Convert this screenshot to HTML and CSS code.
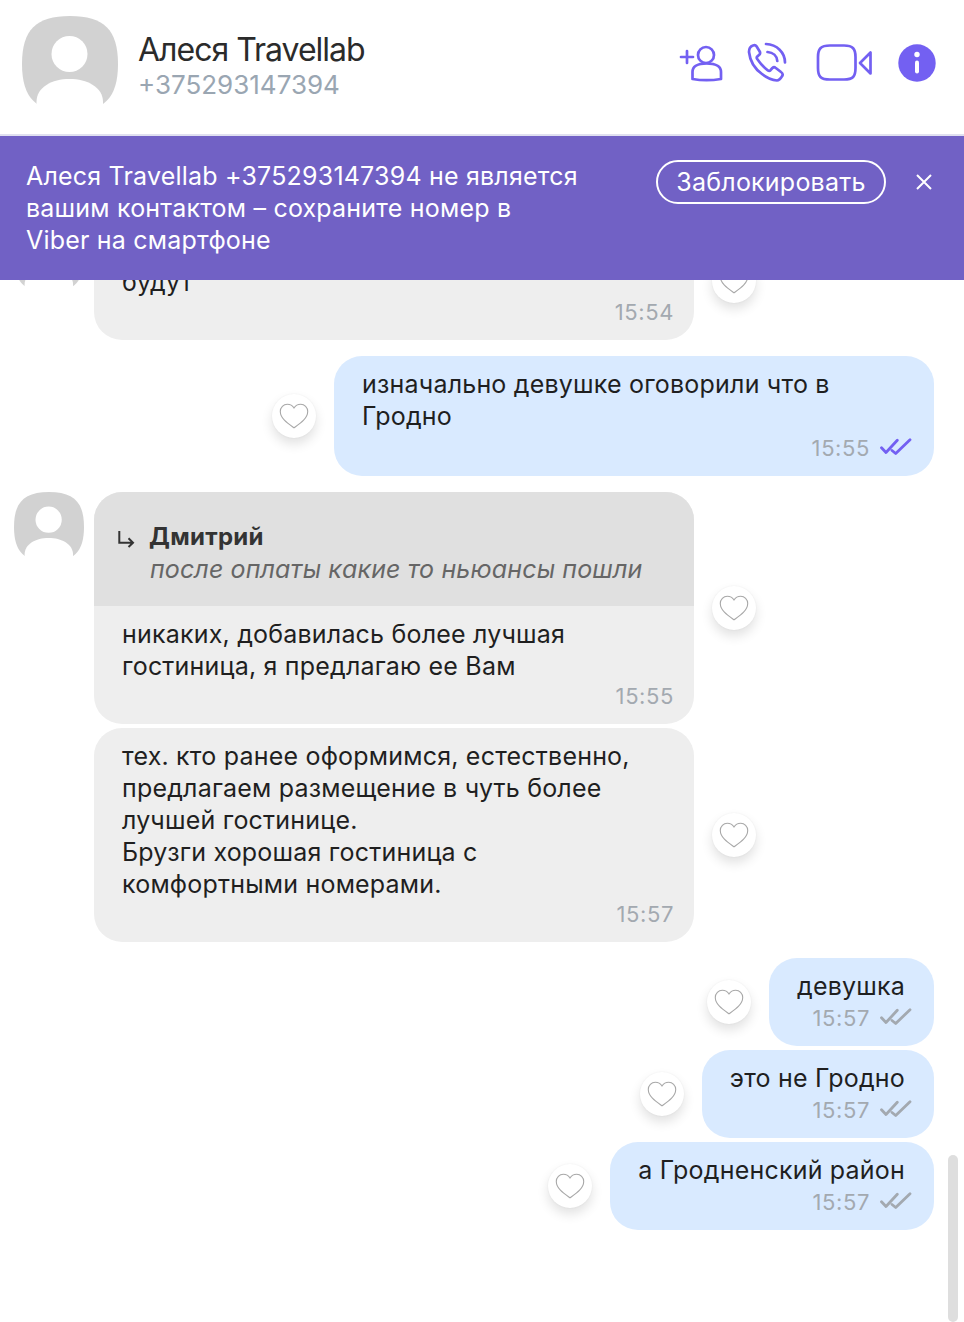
FILE: index.html
```html
<!DOCTYPE html>
<html lang="ru">
<head>
    <meta charset="UTF-8">
    <meta name="viewport" content="width=device-width, initial-scale=1.0">
    <title>Алеся Travellab</title>
    <link rel="stylesheet" href="styles.css">
</head>
<body>
    <svg class="defs" width="0" height="0">
        <symbol id="avatar" viewBox="0 0 96 96">
            <path fill="#d2d2d2" d="M48 0C82 0 96 14 96 48C96 82 82 96 48 96C14 96 0 82 0 48C0 14 14 0 48 0Z"/>
            <circle fill="#fff" cx="47.500" cy="38" r="18"/>
            <path fill="#fff" d="M14.500 96V86C14.500 71 30 63 47.500 63C65 63 81 71 81 86V96Z"/>
        </symbol>
        <symbol id="heart" viewBox="0 0 30 26">
            <path fill="none" stroke="#a8a8a8" stroke-width="1.100" d="M15 24.800C9 20.500 1.300 15.500 1.300 8.500C1.300 4.500 4.500 1.300 8.300 1.300C11 1.300 13.500 2.600 15 5C16.500 2.600 19 1.300 21.700 1.300C25.500 1.300 28.700 4.500 28.700 8.500C28.700 15.500 21 20.500 15 24.800Z"/>
        </symbol>
        <symbol id="ticks" viewBox="881 437 32 18">
            <path fill="none" stroke="currentColor" stroke-width="2.800" stroke-linecap="round" stroke-linejoin="round" d="M882.500 446.700L887 451.500L898.300 439.300M893 449.500L896.700 452.500L911 438.700"/>
        </symbol>
    </svg>

    <div class="app">
        <header class="header">
            <svg class="avatar-big"><use href="#avatar"/></svg>
            <div class="contact">
                <div class="contact-name">Алеся Travellab</div>
                <div class="contact-phone">+375293147394</div>
            </div>
            <div class="actions">
                <svg class="icon icon-add" viewBox="678 44 46 38">
                    <path d="M681 57H693M687 51V63"/>
                    <circle cx="706" cy="55" r="8"/>
                    <path d="M692.500 79V72C692.500 66 698 63.500 706.500 63.500C715 63.500 721 66 721 72V79C712 80.500 701 80.500 692.500 79Z"/>
                </svg>
                <svg class="icon icon-call" viewBox="748 44 40 40">
                    <path d="M753 46.500C750 47.500 749 50 749 53C750 62 755 70 762 75C767 79 772 81 777 81.500C779 81.500 781 79 782.500 76.500C783 75 782.500 74 781 73L775.500 68.800C774.500 68 773.300 68.200 772.400 69L770.500 71.200C769.700 72 768.800 72 767.800 71.300C763.500 68.500 760 64 757.200 60C756.500 59 756.600 58.200 757.300 57.500L759.500 55.500C760.300 54.600 760.300 53.600 759.700 52.500L756.500 47.300C755.800 46.300 754.500 46 753 46.500Z"/>
                    <path d="M766 45C777 45.500 785 53.500 785 63.500M767.500 53C773 53.500 777 57 777.300 62"/>
                </svg>
                <svg class="icon icon-video" viewBox="816 44 57 38">
                    <path d="M830 45.500H844C853 45.500 855.500 49 855.500 57V68C855.500 76.500 853 79.500 844 79.500H830C820.500 79.500 818 76.500 818 68V57C818 49 820.500 45.500 830 45.500Z"/>
                    <path d="M860 63L870.500 52.500V73.500Z"/>
                </svg>
                <svg class="icon-info" viewBox="0 0 38 38">
                    <circle fill="#7360f2" cx="19" cy="19" r="18.700"/>
                    <circle fill="#fff" cx="19" cy="10.500" r="2.700"/>
                    <rect fill="#fff" x="17" y="16.500" width="4" height="13" rx="2"/>
                </svg>
            </div>
        </header>

        <div class="banner">
            <p class="banner-text">Алеся Travellab +375293147394 не является<br>вашим контактом – сохраните номер в<br>Viber на смартфоне</p>
            <button class="block-btn" type="button">Заблокировать</button>
            <svg class="close-icon" viewBox="0 0 16 16"><path d="M1 1L15 15M15 1L1 15"/></svg>
        </div>

        <main class="messages">
            <div class="row in">
                <svg class="avatar"><use href="#avatar"/></svg>
                <div class="bubble">
                    <p class="text">&nbsp;<br>будут</p>
                    <div class="meta">15:54</div>
                </div>
                <button class="like" type="button"><svg><use href="#heart"/></svg></button>
            </div>

            <div class="row out wide">
                <button class="like" type="button"><svg><use href="#heart"/></svg></button>
                <div class="bubble">
                    <p class="text">изначально девушке оговорили что в<br>Гродно</p>
                    <div class="meta">15:55 <svg class="ticks seen"><use href="#ticks"/></svg></div>
                </div>
            </div>

            <div class="row in">
                <svg class="avatar"><use href="#avatar"/></svg>
                <div class="bubble">
                    <div class="reply">
                        <svg class="reply-arrow" viewBox="0 0 18 18"><path d="M2.300 1V12.700H16M11.500 8.300L16 12.700L11.500 17"/></svg>
                        <div>
                            <div class="reply-name">Дмитрий</div>
                            <div class="reply-text">после оплаты какие то ньюансы пошли</div>
                        </div>
                    </div>
                    <p class="text">никаких, добавилась более лучшая<br>гостиница, я предлагаю ее Вам</p>
                    <div class="meta">15:55</div>
                </div>
                <button class="like" type="button"><svg><use href="#heart"/></svg></button>
            </div>

            <div class="row in next">
                <div class="bubble">
                    <p class="text">тех. кто ранее оформимся, естественно,<br>предлагаем размещение в чуть более<br>лучшей гостинице.<br>Брузги хорошая гостиница с<br>комфортными номерами.</p>
                    <div class="meta">15:57</div>
                </div>
                <button class="like" type="button"><svg><use href="#heart"/></svg></button>
            </div>

            <div class="row out">
                <button class="like" type="button"><svg><use href="#heart"/></svg></button>
                <div class="bubble">
                    <p class="text">девушка</p>
                    <div class="meta">15:57 <svg class="ticks"><use href="#ticks"/></svg></div>
                </div>
            </div>

            <div class="row out next">
                <button class="like" type="button"><svg><use href="#heart"/></svg></button>
                <div class="bubble">
                    <p class="text">это не Гродно</p>
                    <div class="meta">15:57 <svg class="ticks"><use href="#ticks"/></svg></div>
                </div>
            </div>

            <div class="row out next">
                <button class="like" type="button"><svg><use href="#heart"/></svg></button>
                <div class="bubble">
                    <p class="text">а Гродненский район</p>
                    <div class="meta">15:57 <svg class="ticks"><use href="#ticks"/></svg></div>
                </div>
            </div>

            <div class="scrollbar"></div>
        </main>
    </div>
</body>
</html>
```

FILE: styles.css
```css
html, body {
    height: 100%;
}
body {
    font-family: Inter, "Noto Sans", sans-serif;
    margin: 0;
    background: #fff;
    color: #1f1f1f;
    overflow: hidden;
}
button {
    font-family: inherit;
    cursor: pointer;
}
.defs {
    position: absolute;
}
.app {
    display: flex;
    flex-direction: column;
    height: 100%;
}

/* шапка */
.header {
    display: flex;
    align-items: center;
    flex: none;
    height: 134px;
    padding: 0 28px 0 22px;
    box-sizing: border-box;
}
.avatar-big {
    flex: none;
    align-self: flex-start;
    width: 96px;
    height: 96px;
    margin: 16px 20px 0 0;
}
.contact {
    flex: 1;
    margin-top: -2px;
}
.contact-name {
    font-size: 32px;
    line-height: 38px;
    letter-spacing: -1px;
    color: #2b2b2b;
}
.contact-phone {
    font-size: 26px;
    line-height: 32px;
    color: #9aa6b2;
}
.actions {
    display: flex;
    align-items: center;
    margin-top: -8px;
}
.icon {
    fill: none;
    stroke: #7360f2;
    stroke-width: 2.700;
    stroke-linecap: round;
    stroke-linejoin: round;
}
.icon-add {
    width: 46px;
    height: 38px;
}
.icon-call {
    width: 40px;
    height: 40px;
    margin-left: 24px;
    overflow: visible;
}
.icon-video {
    width: 57px;
    height: 38px;
    margin-left: 28px;
}
.icon-info {
    width: 38px;
    height: 38px;
    margin-left: 25px;
}

/* плашка */
.banner {
    display: flex;
    align-items: flex-start;
    flex: none;
    height: 146px;
    padding: 24px 32px 0 26px;
    box-sizing: border-box;
    border-top: 2px solid #e0e0f0;
    background: #7161c5;
    color: #fff;
}
.banner-text {
    flex: none;
    width: 570px;
    margin: 0 60px 0 0;
    font-size: 25px;
    line-height: 32px;
    letter-spacing: 0.2px;
}
.block-btn {
    flex: none;
    width: 230px;
    height: 44px;
    padding: 0;
    border: 2px solid #fff;
    border-radius: 22px;
    background: transparent;
    color: #fff;
    font-size: 25px;
    letter-spacing: 0.22px;
}
.close-icon {
    flex: none;
    width: 16px;
    height: 16px;
    margin: 14px 0 0 30px;
    fill: none;
    stroke: #fff;
    stroke-width: 2;
}

/* сообщения */
.messages {
    position: relative;
    flex: 1;
    display: flex;
    flex-direction: column;
    justify-content: flex-end;
    gap: 16px;
    min-height: 0;
    padding-bottom: 92px;
    overflow: hidden;
}
.row {
    display: flex;
    flex: none;
    align-items: center;
    gap: 18px;
}
.row.next {
    margin-top: -12px;
}
.row.in {
    padding-left: 14px;
}
.row.in.next {
    padding-left: 94px;
}
.row.out {
    justify-content: flex-end;
    padding-right: 30px;
}
.avatar {
    flex: none;
    align-self: flex-start;
    width: 70px;
    height: 70px;
    margin-right: -8px;
}
.bubble {
    padding: 12px 22px 14px 28px;
    border-radius: 28px;
    overflow: hidden;
}
.in .bubble {
    width: 600px;
    box-sizing: border-box;
    padding-right: 20px;
    background: #eeeeee;
}
.out .bubble {
    padding-bottom: 15px;
    background: #d9eaff;
}
.out.wide .bubble {
    width: 600px;
    box-sizing: border-box;
}
.text {
    margin: 0;
    font-size: 25px;
    line-height: 32px;
    letter-spacing: 0.2px;
}
.out .text {
    padding-right: 7px;
    text-align: right;
}
.out.wide .text {
    text-align: left;
}
.meta {
    display: flex;
    align-items: center;
    justify-content: flex-end;
    gap: 10px;
    height: 28px;
    font-size: 22px;
    letter-spacing: 0.6px;
    color: #a3a9b0;
}
.out .meta {
    height: 26px;
    margin-top: 3px;
}
.ticks {
    width: 32px;
    height: 18px;
    margin-top: -2px;
    color: #a3a9b0;
}
.ticks.seen {
    color: #7360f2;
}
.like {
    display: flex;
    align-items: center;
    justify-content: center;
    flex: none;
    width: 44px;
    height: 44px;
    padding: 0;
    border: none;
    border-radius: 50%;
    background: #fff;
    box-shadow: 0 6px 12px rgba(0,0,0,0.12), 0 0 2px rgba(0,0,0,0.06);
}
.like svg {
    width: 30px;
    height: 26px;
}

/* цитата */
.reply {
    display: flex;
    align-items: flex-start;
    height: 114px;
    box-sizing: border-box;
    margin: -12px -20px 12px -28px;
    padding: 29px 0 0 23px;
    background: #e0e0e0;
}
.reply-arrow {
    flex: none;
    width: 18px;
    height: 18px;
    margin: 9px 9px 0 0;
    fill: none;
    stroke: #333;
    stroke-width: 2;
}
.reply-name {
    margin-left: 5px;
    font-size: 24px;
    line-height: 32px;
    font-weight: 700;
    letter-spacing: 0.3px;
    color: #333;
}
.reply-text {
    margin-left: 6px;
    font-size: 25px;
    line-height: 32px;
    font-style: italic;
    letter-spacing: 0.12px;
    color: #666;
}

.scrollbar {
    position: absolute;
    right: 6px;
    bottom: 0;
    width: 10px;
    height: 167px;
    border-radius: 5px;
    background: #dedede;
}
```
